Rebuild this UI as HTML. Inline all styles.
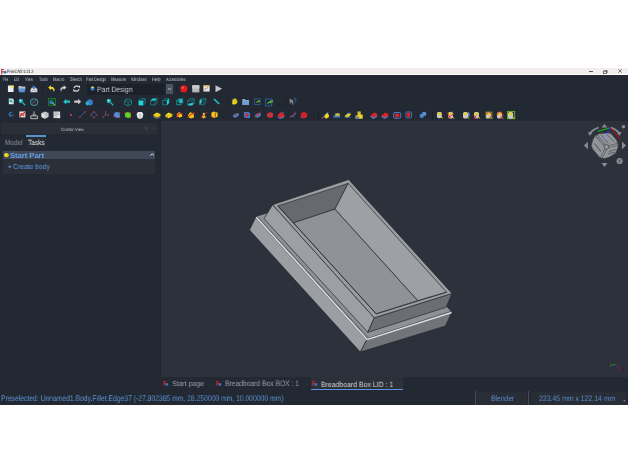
<!DOCTYPE html>
<html><head><meta charset="utf-8">
<style>
*{margin:0;padding:0;box-sizing:border-box}
html,body{width:628px;height:472px;overflow:hidden;background:#fff;font-family:"Liberation Sans",sans-serif}
.a{position:absolute}
.t{white-space:nowrap;will-change:transform;text-rendering:geometricPrecision}
svg{overflow:visible}
</style></head><body>
<div class="a" style="left:0px;top:68.2px;width:628px;height:6.2px;background:#f2eeee;"></div>
<div class="a" style="left:0px;top:74.4px;width:628px;height:0.8px;background:#ffffff;"></div>
<svg class="a" style="left:0.6px;top:68.9px;" width="6" height="5" viewBox="0 0 6 5"><path d="M0.2 0h2.6v1.1h-1.5v1.1h1.3v1.1h-1.3v2.1h-1.1z" fill="#c8232c"/><circle cx="4" cy="3.2" r="1.45" fill="#3f73b9"/></svg>
<div class="a t" style="left:7.30px;top:70.16px;font-size:4.651px;line-height:4.651px;color:#1e1e1e;font-weight:normal;transform:scaleX(0.789);transform-origin:0 0;">FreeCAD 0.21.2</div>
<div class="a" style="left:588.5px;top:71.1px;width:4px;height:0.7px;background:#555555;"></div>
<svg class="a" style="left:602.8px;top:69.6px;" width="5" height="4" viewBox="0 0 5 4"><rect x="0.4" y="1.2" width="3" height="2.4" fill="none" stroke="#555" stroke-width="0.8"/><path d="M1.4 0.5h2.9v2.4" fill="none" stroke="#555" stroke-width="0.7"/></svg>
<svg class="a" style="left:618.0px;top:69.4px;" width="5" height="4" viewBox="0 0 5 4"><path d="M0.3 0.3L3.9 3.7M3.9 0.3L0.3 3.7" stroke="#555" stroke-width="0.8"/></svg>
<div class="a" style="left:0px;top:75.2px;width:628px;height:329.8px;background:#232932;"></div>
<div class="a t" style="left:3.10px;top:78.37px;font-size:5.233px;line-height:5.233px;color:#bcc3cc;font-weight:normal;transform:scaleX(0.605);transform-origin:0 0;">File</div>
<div class="a t" style="left:13.80px;top:77.87px;font-size:5.233px;line-height:5.233px;color:#bcc3cc;font-weight:normal;transform:scaleX(0.532);transform-origin:0 0;">Edit</div>
<div class="a t" style="left:25.30px;top:77.87px;font-size:5.233px;line-height:5.233px;color:#bcc3cc;font-weight:normal;transform:scaleX(0.702);transform-origin:0 0;">View</div>
<div class="a t" style="left:39.20px;top:77.87px;font-size:5.233px;line-height:5.233px;color:#bcc3cc;font-weight:normal;transform:scaleX(0.712);transform-origin:0 0;">Tools</div>
<div class="a t" style="left:53.10px;top:77.87px;font-size:5.233px;line-height:5.233px;color:#bcc3cc;font-weight:normal;transform:scaleX(0.798);transform-origin:0 0;">Macro</div>
<div class="a t" style="left:69.60px;top:77.87px;font-size:5.233px;line-height:5.233px;color:#bcc3cc;font-weight:normal;transform:scaleX(0.750);transform-origin:0 0;">Sketch</div>
<div class="a t" style="left:86.10px;top:77.87px;font-size:5.233px;line-height:5.233px;color:#bcc3cc;font-weight:normal;transform:scaleX(0.743);transform-origin:0 0;">Part Design</div>
<div class="a t" style="left:111.10px;top:77.87px;font-size:5.233px;line-height:5.233px;color:#bcc3cc;font-weight:normal;transform:scaleX(0.732);transform-origin:0 0;">Measure</div>
<div class="a t" style="left:131.30px;top:77.87px;font-size:5.233px;line-height:5.233px;color:#bcc3cc;font-weight:normal;transform:scaleX(0.740);transform-origin:0 0;">Windows</div>
<div class="a t" style="left:152.30px;top:77.87px;font-size:5.233px;line-height:5.233px;color:#bcc3cc;font-weight:normal;transform:scaleX(0.808);transform-origin:0 0;">Help</div>
<div class="a t" style="left:166.00px;top:77.87px;font-size:5.233px;line-height:5.233px;color:#bcc3cc;font-weight:normal;transform:scaleX(0.695);transform-origin:0 0;">Accessories</div>
<svg class="a" style="left:7.0px;top:84.9px" width="7.5" height="7.5" viewBox="0 0 16 16.0"><path d="M2 1h9l3 3v11H2z" fill="#eceef0"/><circle cx="12" cy="3.5" r="3" fill="#f3e33a"/></svg>
<svg class="a" style="left:18.3px;top:84.9px" width="7.8" height="7.8" viewBox="0 0 16 16.0"><path d="M1 2h5l1 1h8v6H1z" fill="#b8bec6"/><path d="M1 7h14l-1 8H2z" fill="#5b8fd6"/></svg>
<svg class="a" style="left:29.8px;top:84.9px" width="7.8" height="7.8" viewBox="0 0 16 16.0"><path d="M1 9l3-4h8l3 4v6H1z" fill="#d9dcdf"/><path d="M3 10h10v2H3z" fill="#a9adb3"/><circle cx="8" cy="5" r="3" fill="#3d78c8"/><path d="M6 1l2 3" stroke="#3d78c8" stroke-width="2"/></svg>
<svg class="a" style="left:47.5px;top:84.9px" width="6.9" height="6.9" viewBox="0 0 16 16.0"><path d="M0.5 6L7 0.5v3.5c5.5 0 9 3.5 8 9.5l-2.5 2.5c0.5-5-1.5-7.5-5.5-7.5v3.5z" fill="#f2d62c"/><path d="M12 14l2 2h-3z" fill="#15191f"/></svg>
<svg class="a" style="left:59.6px;top:84.9px" width="6.6" height="6.6" viewBox="0 0 16 16.0"><path d="M15.5 6L9 0.5v3.5c-5.5 0-9 3.5-8 9.5l2.5 2.5c-0.5-5 1.5-7.5 5.5-7.5v3.5z" fill="#cfd2d5"/><path d="M11 12.5l4 3.5h-5z" fill="#15191f"/></svg>
<svg class="a" style="left:73.4px;top:84.9px" width="7.2" height="7.2" viewBox="0 0 16 16.0"><path d="M2.5 7A5.5 5.5 0 0 1 12 4" fill="none" stroke="#dcdee1" stroke-width="2.6"/><path d="M9.5 1.5h6v6z" fill="#dcdee1"/><path d="M13.5 9A5.5 5.5 0 0 1 4 12" fill="none" stroke="#dcdee1" stroke-width="2.6"/><path d="M6.5 14.5h-6v-6z" fill="#dcdee1"/></svg>
<div class="a" style="left:87.1px;top:83.7px;width:78.1px;height:10.9px;background:#1c2028;"></div>
<div class="a" style="left:166px;top:83.8px;width:6.7px;height:10.3px;background:#4b5261;"></div>
<svg class="a" style="left:167.7px;top:88.3px;" width="3.4" height="2" viewBox="0 0 3.4 2"><path d="M0.2 0.3L1.7 1.6L3.2 0.3" fill="none" stroke="#e0e2e6" stroke-width="0.8"/></svg>
<svg class="a" style="left:89.6px;top:86.2px" width="5" height="5" viewBox="0 0 16 16.0"><path d="M2 4l6-3 6 3v8l-6 3-6-3z" fill="#3b7fd0"/><path d="M2 4l6 3 6-3-6-3z" fill="#f3d23a"/></svg>
<div class="a t" style="left:96.70px;top:85.83px;font-size:7.703px;line-height:7.703px;color:#c9cbce;font-weight:normal;transform:scaleX(0.885);transform-origin:0 0;">Part Design</div>
<svg class="a" style="left:180.1px;top:84.9px" width="7.7" height="7.7" viewBox="0 0 16 16.0"><circle cx="8" cy="8" r="7.5" fill="#e01b1b"/><circle cx="6" cy="5.5" r="2.5" fill="#f35050"/></svg>
<svg class="a" style="left:191.6px;top:84.9px" width="7.6" height="7.6" viewBox="0 0 16 16.0"><rect x="0.5" y="0.5" width="15" height="15" fill="#b4b6b9"/><rect x="0.5" y="0.5" width="15" height="7" fill="#c8cacc"/></svg>
<svg class="a" style="left:203px;top:84.9px" width="7" height="7" viewBox="0 0 16 16.0"><rect x="1" y="1" width="14" height="14" fill="#ecedee"/><rect x="1" y="1" width="14" height="3" fill="#e2b84a"/><path d="M3 11l9-6" stroke="#d0612c" stroke-width="1.6"/><path d="M3 8h7M3 13h9" stroke="#888" stroke-width="0.8"/></svg>
<svg class="a" style="left:214.5px;top:84.9px" width="7.6" height="7.6" viewBox="0 0 16 16.0"><path d="M1 0.5L15 8L1 15.5z" fill="#c3c5c8"/></svg>
<svg class="a" style="left:7.6px;top:98.1px" width="6.6" height="6.6" viewBox="0 0 16 16.0"><path d="M2 1h9l3 3v11H2z" fill="#e6e8ea"/><circle cx="7" cy="7" r="3.6" fill="#1eb4b8"/><path d="M9 9l4 4" stroke="#1eb4b8" stroke-width="2.4"/></svg>
<svg class="a" style="left:18.4px;top:98.1px" width="7.7" height="7.7" viewBox="0 0 16 16.0"><circle cx="6" cy="6" r="4.6" fill="#1fbabd"/><circle cx="5" cy="5" r="1.6" fill="#c6f3f3"/><path d="M9 9l6 6" stroke="#1fbabd" stroke-width="2.6"/></svg>
<svg class="a" style="left:29.8px;top:98.1px" width="8.3" height="8.3" viewBox="0 0 16 16.0"><ellipse cx="8" cy="8" rx="7.3" ry="6.6" fill="none" stroke="#1fb0b3" stroke-width="1.8"/><circle cx="8" cy="8" r="4.6" fill="none" stroke="#c0282a" stroke-width="1.6" stroke-dasharray="2 1.2"/><path d="M5 10l6-5" stroke="#3a86c8" stroke-width="1.6"/></svg>
<svg class="a" style="left:41.3px;top:103.6px;" width="3" height="2" viewBox="0 0 3 2"><path d="M0.3 0.3h2.4L1.5 1.6z" fill="#15191f"/></svg>
<svg class="a" style="left:47.8px;top:98.1px" width="8" height="8" viewBox="0 0 16 16.0"><rect x="0.8" y="0.8" width="14.4" height="14.4" fill="#0d4a1a" stroke="#1f8f35" stroke-width="1.2"/><circle cx="6.5" cy="8.5" r="4" fill="#3a6cc0"/><path d="M9 9.5l5 5" stroke="#e8e8e8" stroke-width="1.8"/></svg>
<svg class="a" style="left:62.8px;top:98.1px" width="7.3" height="6.1" viewBox="0 0 16 13.36986301369863"><path d="M0.5 8L7 1.5v4h8.5v5H7v4z" fill="#21c1c7"/></svg>
<svg class="a" style="left:73.6px;top:98.1px" width="7.3" height="6.1" viewBox="0 0 16 13.36986301369863"><path d="M15.5 8L9 1.5v4H0.5v5H9v4z" fill="#c9cbce"/></svg>
<svg class="a" style="left:85.3px;top:98.1px" width="8.3" height="8.3" viewBox="0 0 16 16.0"><path d="M3 6l6-4 6 3v7l-5 3-7-3z" fill="#3a7bc8"/><path d="M0.5 9l5-2 3 4-5 4z" fill="#21c1c7"/></svg>
<svg class="a" style="left:97px;top:103.6px;" width="3" height="2" viewBox="0 0 3 2"><path d="M0.3 0.3h2.4L1.5 1.6z" fill="#15191f"/></svg>
<svg class="a" style="left:106.3px;top:98.1px" width="7.7" height="7.7" viewBox="0 0 16 16.0"><circle cx="6" cy="6" r="4.6" fill="#1fbabd"/><circle cx="5" cy="5" r="1.6" fill="#c6f3f3"/><path d="M9 9l6 6" stroke="#1fbabd" stroke-width="2.6"/></svg>
<svg class="a" style="left:117.7px;top:103.6px;" width="3" height="2" viewBox="0 0 3 2"><path d="M0.3 0.3h2.4L1.5 1.6z" fill="#15191f"/></svg>
<svg class="a" style="left:124.0px;top:98.1px" width="8.3" height="7" viewBox="0 0 16 13.493975903614457"><path d="M8 1.5l6.5 3v7L8 15l-6.5-2.5v-8z" fill="none" stroke="#179ca2" stroke-width="1.5" stroke-linejoin="round"/><path d="M1.5 5L8 8l6.5-3M8 8v6.5" fill="none" stroke="#179ca2" stroke-width="1.1"/></svg>
<svg class="a" style="left:138.4px;top:98.1px" width="7.9" height="7" viewBox="0 0 16 14.177215189873417"><path d="M1.5 5.5L5.5 1.5h9v9l-4 4h-9z" fill="none" stroke="#179ca2" stroke-width="1.4" stroke-linejoin="round"/><path d="M1.5 5.5h9v9M10.5 5.5l4-4" fill="none" stroke="#179ca2" stroke-width="1.1"/><path d="M1.5 5.5h9v9h-9z" fill="#24d2d8"/></svg>
<svg class="a" style="left:150.1px;top:98.1px" width="7.6" height="7" viewBox="0 0 16 14.73684210526316"><path d="M1.5 5.5L5.5 1.5h9v9l-4 4h-9z" fill="none" stroke="#179ca2" stroke-width="1.4" stroke-linejoin="round"/><path d="M1.5 5.5h9v9M10.5 5.5l4-4" fill="none" stroke="#179ca2" stroke-width="1.1"/><path d="M1.5 5.5L5.5 1.5h9l-4 4z" fill="#24d2d8"/></svg>
<svg class="a" style="left:161.5px;top:98.1px" width="7.6" height="7" viewBox="0 0 16 14.73684210526316"><path d="M1.5 5.5L5.5 1.5h9v9l-4 4h-9z" fill="none" stroke="#179ca2" stroke-width="1.4" stroke-linejoin="round"/><path d="M1.5 5.5h9v9M10.5 5.5l4-4" fill="none" stroke="#179ca2" stroke-width="1.1"/><path d="M10.5 5.5l4-4v9l-4 4z" fill="#24d2d8"/></svg>
<svg class="a" style="left:176.0px;top:98.1px" width="7.4" height="7" viewBox="0 0 16 15.135135135135135"><path d="M1.5 5.5L5.5 1.5h9v9l-4 4h-9z" fill="none" stroke="#179ca2" stroke-width="1.4" stroke-linejoin="round"/><path d="M1.5 5.5h9v9M10.5 5.5l4-4" fill="none" stroke="#179ca2" stroke-width="1.1"/><path d="M6 2.5h8v8h-8z" fill="#24d2d8" opacity="0.9"/><path d="M1.5 5.5h9v9h-9z" fill="none" stroke="#179ca2" stroke-width="1"/></svg>
<svg class="a" style="left:187.4px;top:98.1px" width="7.9" height="7" viewBox="0 0 16 14.177215189873417"><path d="M1.5 5.5L5.5 1.5h9v9l-4 4h-9z" fill="none" stroke="#179ca2" stroke-width="1.4" stroke-linejoin="round"/><path d="M1.5 5.5h9v9M10.5 5.5l4-4" fill="none" stroke="#179ca2" stroke-width="1.1"/><path d="M1.5 14.5L5.5 10.5h9l-4 4z" fill="#24d2d8"/></svg>
<svg class="a" style="left:198.8px;top:98.1px" width="7.4" height="7" viewBox="0 0 16 15.135135135135135"><path d="M1.5 5.5L5.5 1.5h9v9l-4 4h-9z" fill="none" stroke="#179ca2" stroke-width="1.4" stroke-linejoin="round"/><path d="M1.5 5.5h9v9M10.5 5.5l4-4" fill="none" stroke="#179ca2" stroke-width="1.1"/><path d="M1.5 5.5L5.5 1.5v9l-4 4z" fill="#24d2d8"/></svg>
<svg class="a" style="left:213.4px;top:98.1px" width="7.0" height="7.0" viewBox="0 0 16 16.0"><path d="M1 3.5l2.5-2.5 12 11.5-2.5 2.5z" fill="#22c3c9"/></svg>
<svg class="a" style="left:230.9px;top:98.1px" width="7.0" height="7.0" viewBox="0 0 16 16.0"><path d="M3 7c0-4 3-6 6-6 3 0 4 2 4 4 2 1 2 4 1 6-1 3-4 4-7 4-4 0-5-3-4-5z" fill="#e8d21e"/><path d="M6 6c2 0 4 1 4 4M9 4c1 1 2 2 2 3" stroke="#b19c0e" stroke-width="1.1" fill="none"/></svg>
<svg class="a" style="left:241.7px;top:98.1px" width="7.5" height="6.5" viewBox="0 0 16 13.866666666666667"><path d="M1 2h5l1 2h8v11H1z" fill="#8fb0d8"/><path d="M1 6h14v9H1z" fill="#6d9bd4"/></svg>
<svg class="a" style="left:253.8px;top:98.1px" width="6.9" height="6.9" viewBox="0 0 16 16.0"><rect x="1" y="2" width="13" height="13" fill="none" stroke="#2f5d9a" stroke-width="1.8"/><path d="M5 12c0-4 3-6 6-6V4l4 3.5-4 3.5V9c-2 0-4 1-6 3z" fill="#52b83a"/></svg>
<svg class="a" style="left:265.1px;top:98.1px" width="8.4" height="8.4" viewBox="0 0 16 16.0"><rect x="1" y="2" width="12" height="13" fill="none" stroke="#2f5d9a" stroke-width="1.8"/><path d="M4 12c0-4 3-6 6-6V4l3 3.5-3 3.5V9c-2 0-4 1-6 3z" fill="#52b83a"/><path d="M9 8c1-2 3-3 4-3V3l3 3-3 3V7" fill="#52b83a"/></svg>
<svg class="a" style="left:277.2px;top:104.3px;" width="3" height="2" viewBox="0 0 3 2"><path d="M0.3 0.3h2.4L1.5 1.6z" fill="#15191f"/></svg>
<svg class="a" style="left:288.5px;top:98.1px" width="7.6" height="7.6" viewBox="0 0 16 16.0"><path d="M1 1l10 6-4 1 3 5-2 1-3-5-3 3z" fill="#8a8c8f"/><path d="M10 3a2.5 2.5 0 1 1 3 2.5v2" fill="none" stroke="#3f78c0" stroke-width="1.4"/><circle cx="13" cy="10" r="0.9" fill="#3f78c0"/></svg>
<svg class="a" style="left:7.9px;top:111.4px" width="6.3" height="6.3" viewBox="0 0 16 16.0"><path d="M9 1C4 2 1 6 2 10c1 4 6 5 9 3l-2-2c-2 1-4 0-4-2 0-3 3-5 6-5z" fill="#3b78c6"/><path d="M8 9a3 3 0 1 0 6 0" fill="none" stroke="#3b78c6" stroke-width="2"/></svg>
<svg class="a" style="left:18.8px;top:111.4px" width="6.8" height="6.8" viewBox="0 0 16 16.0"><rect x="1" y="1" width="14" height="14" fill="#eae3e3"/><path d="M2 13L14 3" stroke="#d32525" stroke-width="3"/><circle cx="5" cy="7" r="2" fill="#d32525"/><circle cx="11" cy="10" r="2" fill="#d32525"/></svg>
<svg class="a" style="left:29.8px;top:111.4px" width="8.2" height="8.2" viewBox="0 0 16 16.0"><path d="M8 0.5v7M5 6l3 3 3-3" fill="none" stroke="#e2e4e6" stroke-width="1.4"/><path d="M1.5 9.5h13v5.5h-13z" fill="none" stroke="#d8dadc" stroke-width="1.6"/></svg>
<svg class="a" style="left:40.8px;top:111.4px" width="8.1" height="6.9" viewBox="0 0 16 13.629629629629632"><path d="M8 1l7 3v8l-7 3.5L1 12V4z" fill="#c4c6c8"/><path d="M1 4l7 3.5V15.5L1 12z" fill="#dcdee0"/><path d="M8 7.5l7-3.5" stroke="#9a9ca0" stroke-width="0.8"/></svg>
<svg class="a" style="left:52.8px;top:111.4px" width="7.6" height="6.9" viewBox="0 0 16 14.526315789473685"><rect x="1" y="1" width="14" height="14" fill="#d2d4d6"/><path d="M3 4h6M3 7h10M3 10h7" stroke="#9ea1a4" stroke-width="1.3"/><rect x="9" y="9" width="6" height="6" fill="#e8e9ea"/></svg>
<div class="a" style="left:70.0px;top:114.0px;width:1.5px;height:1.5px;background:#c0307a;"></div>
<svg class="a" style="left:78.9px;top:111.4px" width="7" height="7" viewBox="0 0 16 16.0"><path d="M2 14L14 2" stroke="#3f7ccc" stroke-width="1.4"/><circle cx="2" cy="14" r="1.8" fill="#d8262a"/><circle cx="14" cy="2" r="1.8" fill="#d8262a"/></svg>
<svg class="a" style="left:90.4px;top:111.4px" width="7.6" height="7.6" viewBox="0 0 16 16.0"><path d="M8 1.5L14.5 8 8 14.5 1.5 8z" fill="none" stroke="#3f7ccc" stroke-width="1.3"/><circle cx="8" cy="1.8" r="1.7" fill="#d8262a"/><circle cx="14.2" cy="8" r="1.7" fill="#d8262a"/><circle cx="8" cy="14.2" r="1.7" fill="#d8262a"/><circle cx="1.8" cy="8" r="1.7" fill="#d8262a"/></svg>
<svg class="a" style="left:101.8px;top:111.4px" width="7.1" height="7.1" viewBox="0 0 16 16.0"><path d="M8 8V1.5M8 8l6.5 1.5M8 8l-6 6" stroke="#3f7ccc" stroke-width="1.3"/><circle cx="8" cy="8" r="1.6" fill="#d8262a"/><circle cx="8" cy="1.8" r="1.7" fill="#d8262a"/><circle cx="14.2" cy="9.5" r="1.7" fill="#d8262a"/><circle cx="2" cy="14" r="1.7" fill="#d8262a"/></svg>
<svg class="a" style="left:112.8px;top:111.4px" width="7.6" height="7.6" viewBox="0 0 16 16.0"><path d="M2 5l6-3.5 6 2 1 9-5 2.5-8-3z" fill="#4d86d6"/><path d="M4 6l5 2 0 6" stroke="#7eb0ee" stroke-width="0.8" fill="none"/><circle cx="14" cy="3" r="1.6" fill="#d8262a"/><circle cx="1.8" cy="10" r="1.6" fill="#d8262a"/><circle cx="14" cy="13.5" r="1.6" fill="#d8262a"/></svg>
<svg class="a" style="left:124.4px;top:111.4px" width="7.5" height="7.5" viewBox="0 0 16 16.0"><path d="M2 4l6-2 6 2 1 9-6 2.5-7-3z" fill="#5cd22a"/><circle cx="14" cy="3.5" r="1.6" fill="#d8262a"/><circle cx="2" cy="4" r="1.6" fill="#d8262a"/><circle cx="14" cy="13.5" r="1.6" fill="#d8262a"/></svg>
<svg class="a" style="left:136.1px;top:111.4px" width="7.9" height="7.9" viewBox="0 0 16 16.0"><path d="M4 2h8l3 4-2 8-5 2-5-2-2-8z" fill="#e4e6e8"/><path d="M6 6l2 3 2-3M8 9v5" stroke="#8a8d90" stroke-width="1" fill="none"/></svg>
<svg class="a" style="left:153.3px;top:111.4px" width="7.9" height="7.9" viewBox="0 0 16 16.0"><path d="M1 7l7-4 7 3v4l-7 3-7-3z" fill="#f1d520"/><path d="M1 7l7 3 7-3" stroke="#c9aa10" stroke-width="0.9" fill="none"/><path d="M1 12l7 3 7-3" stroke="#a0a4a9" stroke-width="1.4" fill="none"/></svg>
<svg class="a" style="left:164.7px;top:111.4px" width="7.8" height="7.8" viewBox="0 0 16 16.0"><path d="M1 8l6-5 8 3v5l-7 4-7-3z" fill="#f1d520"/><path d="M1 8l7 3 7-5" stroke="#c9aa10" stroke-width="0.9" fill="none"/><path d="M2 14l4-3" stroke="#d8262a" stroke-width="1.4"/></svg>
<svg class="a" style="left:176.0px;top:111.4px" width="7.0" height="7.0" viewBox="0 0 16 16.0"><path d="M2 7l5-5 7 4v7l-6 2-6-3z" fill="#f1c620"/><path d="M1 14l7-9 6 2" stroke="#e0301f" stroke-width="2.6" fill="none"/></svg>
<svg class="a" style="left:187.4px;top:111.4px" width="7.9" height="7.9" viewBox="0 0 16 16.0"><path d="M2 8l5-6 7 5v6l-6 2-6-3z" fill="#f1c620"/><path d="M1 13l7-6 7-3" stroke="#e0301f" stroke-width="2.2" fill="none"/><path d="M14 2l-3 3" stroke="#e0301f" stroke-width="1.6"/></svg>
<svg class="a" style="left:199.7px;top:111.4px" width="7.9" height="7.9" viewBox="0 0 16 16.0"><path d="M6 3l5 2-2 5 4 2-6 3-4-3 3-4z" fill="#f1c620"/><path d="M2 15L15 2" stroke="#d8262a" stroke-width="1.4"/></svg>
<svg class="a" style="left:211.1px;top:111.4px" width="7.0" height="7.0" viewBox="0 0 16 16.0"><path d="M1 4l6-3 8 3v9l-7 3-7-3z" fill="#f1d520"/><path d="M1 4l7 3 7-3M8 7v9" stroke="#b99810" stroke-width="0.9" fill="none"/><path d="M10 3v12" stroke="#d8262a" stroke-width="2"/><path d="M1 12l4 3" stroke="#d8262a" stroke-width="1.5"/></svg>
<svg class="a" style="left:222.0px;top:117.0px;" width="3" height="2" viewBox="0 0 3 2"><path d="M0.3 0.3h2.4L1.5 1.6z" fill="#15191f"/></svg>
<svg class="a" style="left:231.5px;top:111.4px" width="7.6" height="7.6" viewBox="0 0 16 16.0"><path d="M1 10l8-6 6 2-1 4-8 5z" fill="#4a84d0"/><path d="M5 8l4-2 3 1-4 3z" fill="#d8262a"/></svg>
<svg class="a" style="left:242.6px;top:111.4px" width="7.5" height="7.5" viewBox="0 0 16 16.0"><path d="M2 2h10l3 3v10H5l-3-3z" fill="#3e78c6"/><ellipse cx="8.5" cy="8.5" rx="3.2" ry="4.5" fill="#d8262a"/></svg>
<svg class="a" style="left:254.3px;top:111.4px" width="7.5" height="7.5" viewBox="0 0 16 16.0"><path d="M1 10l7-6 7 1-1 5-7 5z" fill="#4a84d0"/><path d="M4 9l6-4 3 0-5 5z" fill="#d8262a"/><path d="M1 15L15 1" stroke="#d8262a" stroke-width="1.4"/></svg>
<svg class="a" style="left:266px;top:111.4px" width="7.5" height="7.5" viewBox="0 0 16 16.0"><path d="M2 6l7-4 6 3v8l-6 2-7-3z" fill="#d8262a"/><path d="M2 6l7 3 6-4M9 9v6" stroke="#3e78c6" stroke-width="1" fill="none"/></svg>
<svg class="a" style="left:277.2px;top:111.4px" width="8.0" height="8.0" viewBox="0 0 16 16.0"><path d="M1 9l6-7 8 5-1 6-7 2z" fill="#d8262a"/><path d="M1 12l6 3 8-4" stroke="#4a84d0" stroke-width="2" fill="none"/><path d="M10 2l4 2" stroke="#4a84d0" stroke-width="1.4"/></svg>
<svg class="a" style="left:288.5px;top:111.4px" width="7.6" height="7.6" viewBox="0 0 16 16.0"><path d="M2 13l4-3 3 2 5-8" stroke="#4a84d0" stroke-width="2" fill="none"/><path d="M1 15L15 1" stroke="#d8262a" stroke-width="1.4"/></svg>
<svg class="a" style="left:300.3px;top:111.4px" width="7.5" height="7.5" viewBox="0 0 16 16.0"><path d="M2 5l6-3 7 3v8l-7 3-6-3z" fill="#e0232a"/><path d="M2 5l6 3 7-3M8 8v8" stroke="#a11318" stroke-width="0.9" fill="none"/><path d="M1 13l4 2" stroke="#4a84d0" stroke-width="1.4"/></svg>
<svg class="a" style="left:311.9px;top:117.0px;" width="3" height="2" viewBox="0 0 3 2"><path d="M0.3 0.3h2.4L1.5 1.6z" fill="#15191f"/></svg>
<svg class="a" style="left:321.2px;top:111.4px" width="8.4" height="8.4" viewBox="0 0 16 16.0"><path d="M2 14l12-12" stroke="#3e78c6" stroke-width="2"/><path d="M7 8l5-4 3 3v5l-5 3-3-2z" fill="#f1d520"/><path d="M1 13l5 0" stroke="#d8262a" stroke-width="1.4"/></svg>
<svg class="a" style="left:333px;top:111.4px" width="7.6" height="7.6" viewBox="0 0 16 16.0"><path d="M1 9h14v5H1z" fill="#3e78c6"/><path d="M5 5h9v5H5z" fill="#f1d520"/><path d="M7 5l2 4M11 5l2 4" stroke="#3e78c6" stroke-width="0.9"/></svg>
<svg class="a" style="left:343.9px;top:111.4px" width="7.7" height="7.7" viewBox="0 0 16 16.0"><path d="M1 11l7-7 7 2-7 8z" fill="#f1d520"/><path d="M1 13h13M4 8l9-5" stroke="#3e78c6" stroke-width="1.6" fill="none"/></svg>
<svg class="a" style="left:355.3px;top:111.4px" width="8.2" height="8.2" viewBox="0 0 16 16.0"><path d="M5 1h6v6h4v8H1V9h4z" fill="#f1d520"/><path d="M1 11h7v4H1z" fill="#3e78c6"/><path d="M8 1v6" stroke="#3e78c6" stroke-width="1"/></svg>
<svg class="a" style="left:369.6px;top:111.4px" width="7.8" height="7.8" viewBox="0 0 16 16.0"><path d="M1 9l8-6 6 3-1 5-8 4z" fill="#e0232a"/><path d="M1 11l6 4 8-4" stroke="#4a84d0" stroke-width="2.2" fill="none"/></svg>
<svg class="a" style="left:381.3px;top:111.4px" width="7.8" height="7.8" viewBox="0 0 16 16.0"><path d="M1 9l8-6 6 3-1 5-8 4z" fill="#e0232a"/><path d="M1 11l6 4 8-4" stroke="#4a84d0" stroke-width="2.2" fill="none"/></svg>
<svg class="a" style="left:392.8px;top:111.4px" width="8.3" height="8.3" viewBox="0 0 16 16.0"><rect x="1" y="3" width="14" height="11" rx="3" fill="none" stroke="#4a84d0" stroke-width="1.8"/><rect x="4" y="5" width="8" height="7" fill="#e0232a"/></svg>
<svg class="a" style="left:404.7px;top:111.4px" width="7.4" height="7.4" viewBox="0 0 16 16.0"><rect x="2" y="2" width="12" height="13" rx="2" fill="none" stroke="#4a84d0" stroke-width="1.8"/><path d="M4 5l7-2v9l-6 2z" fill="#e0232a"/></svg>
<svg class="a" style="left:418.5px;top:111.4px" width="7.9" height="7.9" viewBox="0 0 16 16.0"><circle cx="5.5" cy="10" r="4.3" fill="#4a84d0"/><circle cx="10.5" cy="6" r="4.3" fill="#5a92da"/></svg>
<svg class="a" style="left:435.9px;top:111.4px" width="7.8" height="7.8" viewBox="0 0 16 16.0"><path d="M2 5c0-2 2-3 5-3s5 1 5 3v7c0 2-2 3-5 3s-5-1-5-3z" fill="#c6c8ca"/><ellipse cx="7" cy="5.5" rx="4.2" ry="2.6" fill="#e6cf16"/><path d="M10.5 12l4 3" stroke="#d9c21a" stroke-width="2"/></svg>
<svg class="a" style="left:447.0px;top:111.4px" width="8" height="8" viewBox="0 0 16 16.0"><path d="M2 5c0-2 2-3 5-3s5 1 5 3v7c0 2-2 3-5 3s-5-1-5-3z" fill="#c6c8ca"/><ellipse cx="7" cy="5.5" rx="4.2" ry="2.6" fill="#e6cf16"/><path d="M10.5 12l4 3" stroke="#d9c21a" stroke-width="2"/><path d="M1 3l5 12M2 14l12-9" stroke="#d8262a" stroke-width="1.8"/><path d="M8 1l5 3" stroke="#3e78c6" stroke-width="1.6"/></svg>
<svg class="a" style="left:461.7px;top:111.4px" width="8" height="8" viewBox="0 0 16 16.0"><path d="M2 5c0-2 2-3 5-3s5 1 5 3v7c0 2-2 3-5 3s-5-1-5-3z" fill="#c6c8ca"/><ellipse cx="7" cy="5.5" rx="4.2" ry="2.6" fill="#e6cf16"/><path d="M10.5 12l4 3" stroke="#d9c21a" stroke-width="2"/><path d="M12 2l3 2v7l-3 1z" fill="#5b8fd0"/></svg>
<svg class="a" style="left:472.9px;top:111.4px" width="7.9" height="7.9" viewBox="0 0 16 16.0"><path d="M2 5c0-2 2-3 5-3s5 1 5 3v7c0 2-2 3-5 3s-5-1-5-3z" fill="#c6c8ca"/><ellipse cx="7" cy="5.5" rx="4.2" ry="2.6" fill="#e6cf16"/><path d="M10.5 12l4 3" stroke="#d9c21a" stroke-width="2"/><path d="M1 8l6 7M1 15l6-6" stroke="#d8262a" stroke-width="2"/></svg>
<svg class="a" style="left:484.5px;top:111.4px" width="8" height="8" viewBox="0 0 16 16.0"><rect x="1" y="1" width="14" height="14" fill="#3d8a2a"/><path d="M2 5c0-2 2-3 5-3s5 1 5 3v7c0 2-2 3-5 3s-5-1-5-3z" fill="#c6c8ca"/><ellipse cx="7" cy="5.5" rx="4.2" ry="2.6" fill="#e6cf16"/><path d="M10.5 12l4 3" stroke="#d9c21a" stroke-width="2"/><path d="M8 1l7 7-7 7" stroke="#d8262a" stroke-width="2" fill="none"/><path d="M8 1L1 8" stroke="#d8262a" stroke-width="2"/></svg>
<svg class="a" style="left:495.6px;top:111.4px" width="8" height="8" viewBox="0 0 16 16.0"><path d="M2 5c0-2 2-3 5-3s5 1 5 3v7c0 2-2 3-5 3s-5-1-5-3z" fill="#c6c8ca"/><ellipse cx="7" cy="5.5" rx="4.2" ry="2.6" fill="#e6cf16"/><path d="M10.5 12l4 3" stroke="#d9c21a" stroke-width="2"/><path d="M8 1l7 7-7 7" stroke="#d8262a" stroke-width="2" fill="none"/><path d="M8 1L1 8" stroke="#d8262a" stroke-width="2"/></svg>
<svg class="a" style="left:507.3px;top:111.4px" width="8.2" height="8.2" viewBox="0 0 16 16.0"><rect x="1" y="1" width="14" height="14" fill="none" stroke="#5aa828" stroke-width="2"/><path d="M2 5c0-2 2-3 5-3s5 1 5 3v7c0 2-2 3-5 3s-5-1-5-3z" fill="#c6c8ca"/><ellipse cx="7" cy="5.5" rx="4.2" ry="2.6" fill="#e6cf16"/><path d="M10.5 12l4 3" stroke="#d9c21a" stroke-width="2"/></svg>
<div class="a" style="left:226.7px;top:97.3px;width:0.7px;height:8.700000000000003px;background:#1c2027;"></div>
<div class="a" style="left:285.6px;top:97.3px;width:0.7px;height:8.700000000000003px;background:#1c2027;"></div>
<div class="a" style="left:317.8px;top:110.6px;width:0.7px;height:9.0px;background:#1c2027;"></div>
<div class="a" style="left:431.6px;top:110.6px;width:0.7px;height:9.0px;background:#1c2027;"></div>
<div class="a" style="left:42.3px;top:84.3px;width:0.7px;height:8.5px;background:#1c2027;"></div>
<div class="a" style="left:69.5px;top:84.3px;width:0.7px;height:8.5px;background:#1c2027;"></div>
<div class="a" style="left:176.0px;top:84.3px;width:0.7px;height:8.5px;background:#1c2027;"></div>
<div class="a" style="left:147.5px;top:110.6px;width:0.7px;height:9.0px;background:#1c2027;"></div>
<div class="a" style="left:65.4px;top:110.6px;width:0.7px;height:9.0px;background:#1c2027;"></div>
<div class="a" style="left:0.5px;top:123.1px;width:156.3px;height:10.8px;background:#2a2f38;"></div>
<div class="a" style="left:159.9px;top:121.3px;width:1.2px;height:256.1px;background:#1f242b;"></div>
<div class="a t" style="left:60.70px;top:127.54px;font-size:4.506px;line-height:4.506px;color:#c2c7ce;font-weight:normal;transform:scaleX(0.888);transform-origin:0 0;">Combo View</div>
<div class="a" style="left:145.3px;top:127.0px;width:2.8px;height:2.8px;background:none;border:0.6px solid #3b4048"></div>
<svg class="a" style="left:151.6px;top:127.1px;" width="3" height="3" viewBox="0 0 3 3"><path d="M0.3 0.3L2.5 2.5M2.5 0.3L0.3 2.5" stroke="#40454d" stroke-width="0.6"/></svg>
<div class="a" style="left:25.8px;top:137px;width:20.5px;height:10.8px;background:#272c35;"></div>
<div class="a" style="left:25.8px;top:135.1px;width:20.5px;height:1.8px;background:#5b8fd0;"></div>
<div class="a t" style="left:5.25px;top:138.50px;font-size:7.558px;line-height:7.558px;color:#8a9098;font-weight:normal;transform:scaleX(0.857);transform-origin:0 0;">Model</div>
<div class="a t" style="left:28.20px;top:138.50px;font-size:7.558px;line-height:7.558px;color:#e4e6e9;font-weight:normal;transform:scaleX(0.864);transform-origin:0 0;">Tasks</div>
<div class="a" style="left:2.7px;top:151.0px;width:152.6px;height:8.0px;background:#404756;"></div>
<div class="a" style="left:2.7px;top:159.0px;width:152.6px;height:15.0px;background:#2a2f38;"></div>
<svg class="a" style="left:4.3px;top:152.6px;" width="5" height="4.4" viewBox="0 0 5 4.4"><ellipse cx="2.4" cy="2.2" rx="2.4" ry="2.1" fill="#e2cf16"/><ellipse cx="1.8" cy="1.6" rx="1" ry="0.8" fill="#fbf07a"/></svg>
<div class="a t" style="left:10.00px;top:152.08px;font-size:7.413px;line-height:7.413px;color:#62a2ea;font-weight:bold;transform:scaleX(1.022);transform-origin:0 0;">Start Part</div>
<svg class="a" style="left:150.2px;top:153.3px;" width="4.4" height="3" viewBox="0 0 4.4 3"><path d="M0.4 2.5L2.2 0.8L4 2.5" fill="none" stroke="#dfe2e6" stroke-width="1.0"/></svg>
<svg class="a" style="left:8.1px;top:165.3px;" width="3.5" height="3.5" viewBox="0 0 3.5 3.5"><path d="M1.75 0.2L3.3 1.75L1.75 3.3L0.2 1.75z" fill="#4b86d0"/></svg>
<div class="a t" style="left:13.40px;top:163.18px;font-size:7.413px;line-height:7.413px;color:#5d9be0;font-weight:normal;transform:scaleX(0.909);transform-origin:0 0;">Create body</div>
<div class="a" style="left:161.1px;top:121.3px;width:466.9px;height:256.1px;background:#2c313b;"></div>
<svg class="a" style="left:163px;top:380.9px;" width="5.5" height="5.2" viewBox="0 0 5.5 5.2"><path d="M0.3 0.1h2.6v1h-1.6v1h1.4v1h-1.4v2h-1z" fill="#c8232c"/><circle cx="3.8" cy="3.4" r="1.5" fill="#3f73b9"/></svg>
<div class="a t" style="left:171.90px;top:379.78px;font-size:7.413px;line-height:7.413px;color:#9a9fa7;font-weight:normal;transform:scaleX(0.936);transform-origin:0 0;">Start page</div>
<svg class="a" style="left:209px;top:383px;" width="2.6" height="2.6" viewBox="0 0 2.6 2.6"><path d="M0.2 0.2L2.4 2.4M2.4 0.2L0.2 2.4" stroke="#3a3f47" stroke-width="0.6"/></svg>
<svg class="a" style="left:216px;top:381.2px;" width="5.5" height="5.2" viewBox="0 0 5.5 5.2"><path d="M0.3 0.1h2.6v1h-1.6v1h1.4v1h-1.4v2h-1z" fill="#c8232c"/><circle cx="3.8" cy="3.4" r="1.5" fill="#3f73b9"/></svg>
<div class="a t" style="left:224.70px;top:380.38px;font-size:7.994px;line-height:7.994px;color:#9a9fa7;font-weight:normal;transform:scaleX(0.841);transform-origin:0 0;">Breadboard Box BOX : 1</div>
<svg class="a" style="left:305px;top:383px;" width="2.6" height="2.6" viewBox="0 0 2.6 2.6"><path d="M0.2 0.2L2.4 2.4M2.4 0.2L0.2 2.4" stroke="#3a3f47" stroke-width="0.6"/></svg>
<div class="a" style="left:311.0px;top:377.4px;width:91.5px;height:12.6px;background:#2b3039;"></div>
<div class="a" style="left:311.0px;top:388.8px;width:91.5px;height:1.2px;background:#5b95dd;"></div>
<svg class="a" style="left:311.7px;top:381.4px;" width="5.5" height="5.2" viewBox="0 0 5.5 5.2"><path d="M0.3 0.1h2.6v1h-1.6v1h1.4v1h-1.4v2h-1z" fill="#c8232c"/><circle cx="3.8" cy="3.4" r="1.5" fill="#3f73b9"/></svg>
<div class="a t" style="left:320.60px;top:381.10px;font-size:7.558px;line-height:7.558px;color:#d2d4d8;font-weight:normal;transform:scaleX(0.915);transform-origin:0 0;">Breadboard Box LID : 1</div>
<svg class="a" style="left:397.4px;top:383px;" width="2.6" height="2.6" viewBox="0 0 2.6 2.6"><path d="M0.2 0.2L2.4 2.4M2.4 0.2L0.2 2.4" stroke="#3a3f47" stroke-width="0.6"/></svg>
<div class="a t" style="left:1.10px;top:394.94px;font-size:8.285px;line-height:8.285px;color:#5b93d6;font-weight:normal;transform:scaleX(0.819);transform-origin:0 0;">Preselected: Unnamed1.Body.Fillet.Edge37 (-27.802385 mm, 28.250000 mm, 10.000000 mm)</div>
<div class="a" style="left:474.6px;top:391px;width:0.8px;height:14px;background:#474c55;"></div>
<div class="a" style="left:477px;top:391.5px;width:49.7px;height:13.5px;background:#282d36;"></div>
<div class="a" style="left:528.3px;top:391px;width:0.8px;height:14px;background:#474c55;"></div>
<div class="a" style="left:531px;top:391.5px;width:96.4px;height:13.5px;background:#282d36;"></div>
<div class="a t" style="left:491.40px;top:395.18px;font-size:7.994px;line-height:7.994px;color:#5b8fd0;font-weight:normal;transform:scaleX(0.849);transform-origin:0 0;">Blender</div>
<div class="a t" style="left:539.30px;top:395.18px;font-size:7.994px;line-height:7.994px;color:#5b8fd0;font-weight:normal;transform:scaleX(0.863);transform-origin:0 0;">223.45 mm x 122.14 mm</div>
<svg class="a" style="left:622.8px;top:400px;" width="3" height="2" viewBox="0 0 3 2"><path d="M0.2 0.2h2.4L1.4 1.6z" fill="#8fa8c8"/></svg>
<svg class="a" style="left:0;top:0" width="628" height="472" viewBox="0 0 628 472"><polygon points="256.20,216.40 340.70,189.60 451.80,312.00 367.30,338.80" fill="#8e9196" stroke="#26292e" stroke-width="0.6"/><polygon points="256.20,216.40 367.30,338.80 360.30,352.10 249.50,230.00" fill="#9b9ea3" stroke="#26292e" stroke-width="0.7"/><polygon points="367.30,338.80 451.80,312.00 445.40,326.00 360.30,352.10" fill="#717479" stroke="#26292e" stroke-width="0.7"/><polyline points="255.00,217.30 366.00,339.30" fill="none" stroke="#5a5d62" stroke-width="0.6"/><polyline points="257.20,216.30 368.60,338.40 451.20,311.10" fill="none" stroke="#3f4247" stroke-width="0.6"/><polyline points="256.30,217.20 367.20,339.40 451.60,312.50" fill="none" stroke="#dcdfe4" stroke-width="1.45"/><polygon points="272.60,204.70 374.30,317.80 367.80,332.30 264.00,218.70" fill="#9c9fa4" stroke="#26292e" stroke-width="0.7"/><polygon points="374.30,317.80 452.00,293.40 446.00,307.30 367.80,332.30" fill="#6b6e73" stroke="#26292e" stroke-width="0.7"/><polygon points="272.60,204.70 348.70,179.60 452.00,293.40 374.30,317.80" fill="#9a9da2" stroke="#26292e" stroke-width="0.7"/><polygon points="277.80,205.90 348.20,183.40 334.90,209.20 293.50,222.80" fill="#67696e" stroke="#26292e" stroke-width="0.7"/><polygon points="348.20,183.40 446.60,292.20 417.70,300.60 334.90,209.20" fill="#9da0a5" stroke="#26292e" stroke-width="0.7"/><polygon points="293.50,222.80 334.90,209.20 417.70,300.60 376.20,313.90" fill="#8f9297" stroke="#26292e" stroke-width="0.7"/><polyline points="277.80,205.90 376.20,313.90 446.60,292.20" fill="none" stroke="#26292e" stroke-width="0.7"/></svg>
<svg class="a" style="left:0;top:0" width="628" height="472" viewBox="0 0 628 472"><path d="M601.6 127.4L604.5 124.1L607.4 127.4z" fill="#8a8d92"/><path d="M601.6 163L604.5 166.9L607.4 163z" fill="#8a8d92"/><path d="M587.9 141.6L584 145.4L587.9 149.3z" fill="#8a8d92"/><path d="M622 141.6L626 145.4L622 149.3z" fill="#8a8d92"/><path d="M590 133.2Q593.5 129 598.6 127.6" fill="none" stroke="#8a8d92" stroke-width="1.6"/><path d="M587.8 131.8L589.6 135.8L592.4 133.2z" fill="#8a8d92"/><path d="M619.4 133.2Q615.9 129 610.8 127.6" fill="none" stroke="#8a8d92" stroke-width="1.6"/><path d="M621.6 131.8L619.8 135.8L617 133.2z" fill="#8a8d92"/><circle cx="623.5" cy="126.7" r="1.8" fill="#8a8d92"/><circle cx="619.6" cy="161" r="3.1" fill="#8a8d92"/><path d="M618 159.4L619.6 161L621.2 159.4M619.6 161V163" stroke="#2c313b" stroke-width="0.6" fill="none"/><path d="M595.40,135.40 599.54,133.50 609.07,132.86 611.30,133.81 616.70,140.17 618.29,144.62 617.97,147.80 615.43,153.52 609.07,157.34 604.62,158.61 599.54,157.34 592.54,149.07 591.27,145.26 592.86,139.54z" fill="#92959a" stroke="#3e4146" stroke-width="0.8" stroke-linejoin="round"/><path d="M597.12 136.36L604.11 144.49" stroke="#45484d" stroke-width="2.5" stroke-linecap="round"/><path d="M597.12 136.36L604.11 144.49" stroke="#8f9297" stroke-width="1.5" stroke-linecap="round"/><path d="M609.07 146.66L617.02 144.49" stroke="#45484d" stroke-width="2.5" stroke-linecap="round"/><path d="M609.07 146.66L617.02 144.49" stroke="#8f9297" stroke-width="1.5" stroke-linecap="round"/><path d="M605.58 149.39L601.57 157.21" stroke="#45484d" stroke-width="2.5" stroke-linecap="round"/><path d="M605.58 149.39L601.57 157.21" stroke="#8f9297" stroke-width="1.5" stroke-linecap="round"/><path d="M601.13 135.09L608.12 143.03M606.21 133.94L614.16 141.76M609.07 151.61L615.43 149.39M608.12 153.84L614.48 152.25" stroke="#45484d" stroke-width="0.7" stroke-linecap="round"/><path d="M594.45 143.67L600.81 151.30" stroke="#4a4d52" stroke-width="1.3" stroke-dasharray="0.9 0.45"/><circle cx="606.40" cy="146.85" r="2.45" fill="#92959a" stroke="#45484d" stroke-width="0.7"/><path d="M610.1 127.9L597.7 131.3" stroke="#1aa21a" stroke-width="1.3"/><path d="M610.1 127.9L607.2 133" stroke="#1e2fc0" stroke-width="1.2"/><path d="M607.2 133L604 139.1" stroke="#7f8fe8" stroke-width="1"/><path d="M610.1 127.9L620.1 138.6" stroke="#a11a1f" stroke-width="1.2"/><path d="M615.7 364.3L609.3 365.6" stroke="#1c9a22" stroke-width="0.9"/><path d="M615.7 364.3L621.4 370.2" stroke="#a3191e" stroke-width="0.8"/><path d="M615.7 364.3L613.4 369" stroke="#1e2aa0" stroke-width="0.9"/><circle cx="608.6" cy="365.1" r="0.7" fill="#111"/><circle cx="622.5" cy="369.8" r="0.7" fill="#111"/></svg>
</body></html>
